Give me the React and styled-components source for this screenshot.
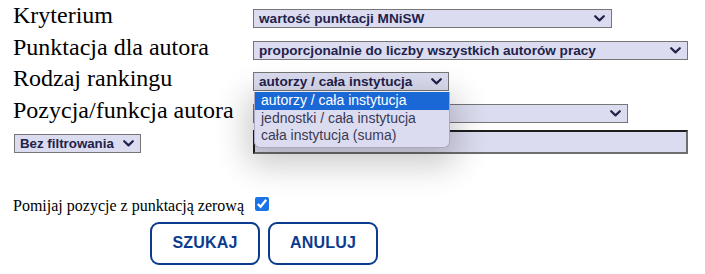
import React from 'react';
import styled, { createGlobalStyle } from 'styled-components';

const GlobalStyle = createGlobalStyle`
body {
  margin: 0;
  background: #ffffff;
  font-family: "Liberation Serif", "Times New Roman", serif;
}
`;

const Page = styled.div`
padding: 0 0 0 13px;
width: 705px;
height: 274px;
box-sizing: border-box;
overflow: hidden;
`;

const Row = styled.div`
display: grid;
grid-template-columns: 240px auto;
align-items: baseline;
padding: 2px 0;
height: 31.6px;
box-sizing: border-box;
position: relative;
`;

const Label = styled.div`
font-size: 24px;
line-height: 27.6px;
color: #000;
white-space: nowrap;
`;

const Select = styled.div`
display: inline-flex;
align-items: center;
justify-content: space-between;
box-sizing: border-box;
width: ${p => p.$w}px;
height: 19px;
padding: 0 6px 0 5px;
background: #dcdcf0;
border: 1px solid #767676;
font-family: "Liberation Sans", Arial, sans-serif;
font-weight: bold;
font-size: ${p => p.$fs || 13.6}px;
line-height: 15px;
color: #22224a;
white-space: nowrap;
justify-self: start;
margin-left: ${p => p.$ml || 0}px;
`;

const Chevron = () => (
  <svg width="11" height="7" viewBox="0 0 11 7">
    <path d="M1.2 1.2 L5.5 5.4 L9.8 1.2" fill="none" stroke="#22224a" strokeWidth="2.2" strokeLinecap="round" strokeLinejoin="round" />
  </svg>
);

const Popup = styled.ul`
position: absolute;
left: 241px;
top: 28.8px;
width: 194px;
margin: 0;
padding: 0 0 2px;
list-style: none;
background: #dcdcf0;
border: 1px solid #a9a9bf;
border-top: none;
border-radius: 0 0 6px 6px;
box-shadow: 0 10px 32px 8px rgba(0, 0, 0, 0.2);
font-family: "Liberation Sans", Arial, sans-serif;
font-size: 14px;
line-height: 17.6px;
color: #3a3a55;
z-index: 5;
overflow: hidden;
`;

const Option = styled.li`
padding: 0 6px;
background: ${p => (p.$active ? '#1a68d6' : 'transparent')};
color: ${p => (p.$active ? '#ffffff' : '#3a3a55')};
white-space: nowrap;
`;

const FilterRow = styled.div`
display: grid;
grid-template-columns: 240px auto;
align-items: start;
padding-top: 4px;
`;

const FilterSelect = styled(Select)`
margin-top: 4px;
`;

const TextBox = styled.input`
box-sizing: border-box;
width: 435px;
height: 24px;
background: #dcdcf0;
border-style: solid;
border-width: 2px;
border-color: #1e1e1e #6e6e6e #6e6e6e #1e1e1e;
margin: 0;
padding: 0 4px;
`;

const CheckRow = styled.label`
display: flex;
align-items: baseline;
gap: 11px;
margin-top: 43px;
font-size: 16px;
line-height: 18.4px;
color: #000;
`;

const Check = styled.input`
width: 14px;
height: 14px;
margin: 0;
accent-color: #1a73e8;
`;

const Buttons = styled.div`
display: flex;
gap: 8px;
margin: 6px 0 0 137px;
`;

const Button = styled.button`
width: 110px;
height: 43px;
box-sizing: border-box;
background: #ffffff;
border: 2px solid #0b3b8f;
border-radius: 9px;
font-family: "Liberation Sans", Arial, sans-serif;
font-weight: bold;
font-size: 16px;
color: #0b3b8f;
letter-spacing: 0.2px;
cursor: pointer;
`;

const App = () => (
  <Page>
    <GlobalStyle />
    <Row>
      <Label>Kryterium</Label>
      <Select $w={359}>wartość punktacji MNiSW<Chevron /></Select>
    </Row>
    <Row>
      <Label>Punktacja dla autora</Label>
      <Select $w={435}>proporcjonalnie do liczby wszystkich autorów pracy<Chevron /></Select>
    </Row>
    <Row>
      <Label>Rodzaj rankingu</Label>
      <Select $w={196}>autorzy / cała instytucja<Chevron /></Select>
      <Popup>
        <Option $active>autorzy / cała instytucja</Option>
        <Option>jednostki / cała instytucja</Option>
        <Option>cała instytucja (suma)</Option>
      </Popup>
    </Row>
    <Row>
      <Label>Pozycja/funkcja autora</Label>
      <Select $w={375}>&nbsp;<Chevron /></Select>
    </Row>
    <FilterRow>
      <FilterSelect $w={127} $ml={1} $fs={13.3}>Bez filtrowania<Chevron /></FilterSelect>
      <TextBox type="text" />
    </FilterRow>
    <CheckRow>
      Pomijaj pozycje z punktacją zerową
      <Check type="checkbox" defaultChecked />
    </CheckRow>
    <Buttons>
      <Button type="button">SZUKAJ</Button>
      <Button type="button">ANULUJ</Button>
    </Buttons>
  </Page>
);

export default App;
